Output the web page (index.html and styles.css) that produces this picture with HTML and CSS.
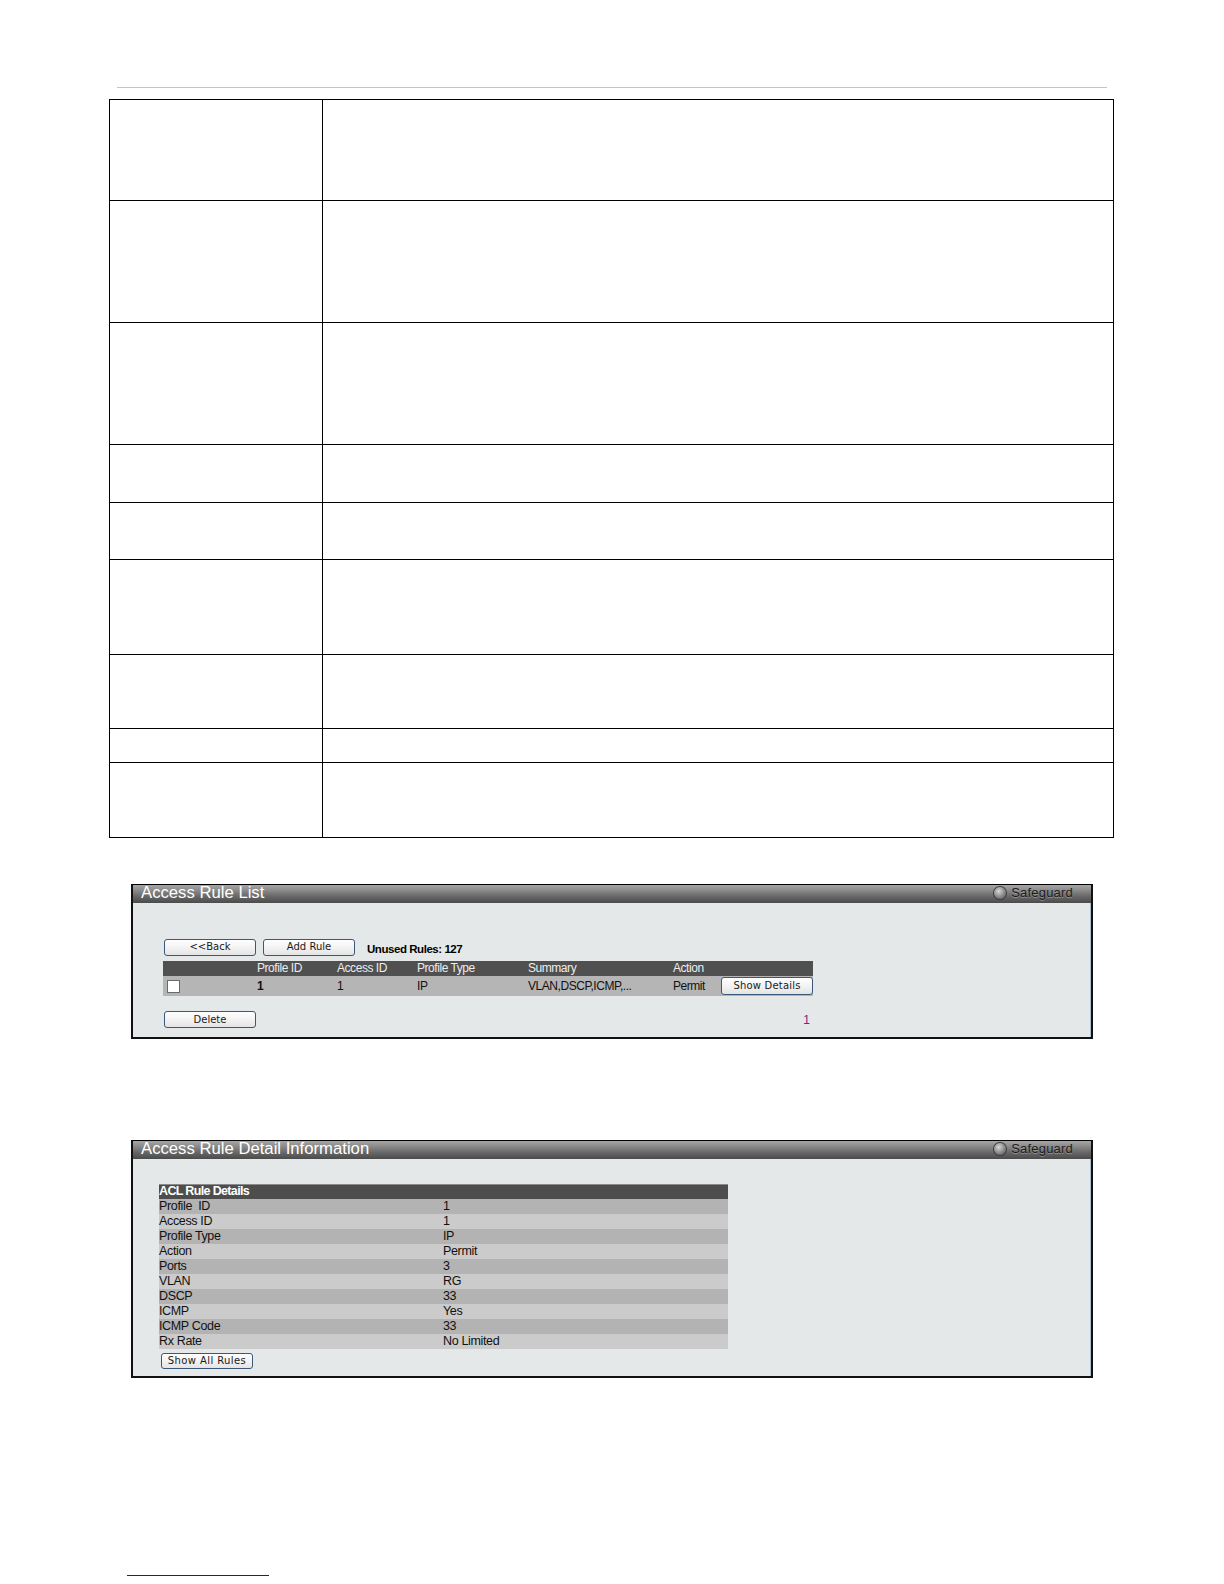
FILE: index.html
```html
<!DOCTYPE html>
<html>
<head>
<meta charset="utf-8">
<link rel="stylesheet" href="styles.css">
</head>
<body>
<div class="page">
  <div class="top-rule"></div>
  <table class="doc">
    <colgroup><col class="doc-c1"><col></colgroup>
    <tr class="r1"><td></td><td></td></tr>
    <tr class="r2"><td></td><td></td></tr>
    <tr class="r3"><td></td><td></td></tr>
    <tr class="r4"><td></td><td></td></tr>
    <tr class="r5"><td></td><td></td></tr>
    <tr class="r6"><td></td><td></td></tr>
    <tr class="r7"><td></td><td></td></tr>
    <tr class="r8"><td></td><td></td></tr>
    <tr class="r9"><td></td><td></td></tr>
  </table>

  <div class="panel panel-list">
    <div class="titlebar">
      <span class="title">Access Rule List</span>
      <span class="safeguard"><span class="led"></span><span class="sg-text">Safeguard</span></span>
    </div>
    <div class="body body-list">
      <div class="btn-row">
        <button class="btn btn-wide">&lt;&lt;Back</button>
        <button class="btn btn-wide">Add Rule</button>
        <span class="unused">Unused Rules: 127</span>
      </div>
      <table class="rules">
        <colgroup>
          <col class="c-chk"><col class="c-pid"><col class="c-aid"><col class="c-type"><col class="c-sum"><col class="c-act"><col class="c-btn">
        </colgroup>
        <tr class="rules-head">
          <th></th><th>Profile ID</th><th>Access ID</th><th>Profile Type</th><th>Summary</th><th>Action</th><th></th>
        </tr>
        <tr class="rules-row">
          <td><span class="chk"></span></td>
          <td class="bold">1</td>
          <td>1</td>
          <td>IP</td>
          <td>VLAN,DSCP,ICMP,...</td>
          <td>Permit</td>
          <td><button class="btn btn-details">Show Details</button></td>
        </tr>
      </table>
      <div class="bottom-row">
        <button class="btn btn-wide btn-delete">Delete</button>
        <span class="pager">1</span>
      </div>
    </div>
  </div>

  <div class="panel panel-detail">
    <div class="titlebar">
      <span class="title">Access Rule Detail Information</span>
      <span class="safeguard"><span class="led"></span><span class="sg-text">Safeguard</span></span>
    </div>
    <div class="body body-detail">
      <table class="details">
        <colgroup><col class="d-c1"><col></colgroup>
        <tr class="details-head"><th colspan="2">ACL Rule Details</th></tr>
        <tr><td>Profile&nbsp;&nbsp;ID</td><td>1</td></tr>
        <tr><td>Access ID</td><td>1</td></tr>
        <tr><td>Profile Type</td><td>IP</td></tr>
        <tr><td>Action</td><td>Permit</td></tr>
        <tr><td>Ports</td><td>3</td></tr>
        <tr><td>VLAN</td><td>RG</td></tr>
        <tr><td>DSCP</td><td>33</td></tr>
        <tr><td>ICMP</td><td>Yes</td></tr>
        <tr><td>ICMP Code</td><td>33</td></tr>
        <tr><td>Rx Rate</td><td>No Limited</td></tr>
      </table>
      <button class="btn btn-all">Show All Rules</button>
    </div>
  </div>

  <div class="foot-rule"></div>
</div>
</body>
</html>
```

FILE: styles.css
```css
html, body {
  margin: 0;
  padding: 0;
  background: #ffffff;
}
body {
  font-family: "Liberation Sans", Arial, sans-serif;
  color: #000;
}
.page {
  width: 1224px;
  height: 1584px;
  padding-top: 87px;
  box-sizing: border-box;
}
.top-rule {
  margin-left: 117px;
  width: 990px;
  height: 1px;
  background: #c4c4c4;
}

/* document table */
.doc {
  margin: 11px 0 0 109px;
  width: 1005px;
  border-collapse: collapse;
  table-layout: fixed;
}
.doc td {
  border: 1.5px solid #000;
  padding: 0;
}
.doc-c1 { width: 213px; }
.r1 { height: 101px; }
.r2 { height: 122px; }
.r3 { height: 122px; }
.r4 { height: 58px; }
.r5 { height: 57px; }
.r6 { height: 95px; }
.r7 { height: 74px; }
.r8 { height: 34px; }
.r9 { height: 75px; }

/* panels */
.panel {
  margin-left: 131px;
  width: 962px;
  box-sizing: border-box;
  border: 2px solid #111;
  border-top: 1px solid #000;
  background: #e5e8e8;
  box-shadow: inset -1px 0 0 #a9bdd2;
}
.panel-list { margin-top: 46px; height: 155px; }
.panel-detail { margin-top: 101px; height: 238px; }

.titlebar {
  height: 18px;
  display: flex;
  align-items: center;
  justify-content: space-between;
  padding: 0 18px 0 8px;
  background: linear-gradient(#a6a6a6 0%, #8a8a8a 30%, #666 65%, #4b4b4b 100%);
}
.title {
  color: #fff;
  font-size: 16.7px;
  line-height: 16px;
  margin-top: -3px;
}
.safeguard {
  display: flex;
  align-items: center;
  gap: 5px;
  margin-top: -2px;
}
.led {
  width: 12px;
  height: 12px;
  border-radius: 50%;
  background: radial-gradient(circle at 40% 35%, #d8d8d8 0%, #8e8e8e 50%, #4a4a4a 100%);
  box-shadow: 0 0 0 1px #3a3a3a;
}
.sg-text {
  font-size: 13px;
  line-height: 14px;
  color: #1c1c1c;
  text-shadow: 0 1px 0 rgba(190, 190, 190, 0.5);
  letter-spacing: 0.2px;
}

.body-list {
  padding: 36px 0 0 30px;
}
.body-detail {
  padding: 25px 0 0 26px;
}

/* buttons */
.btn {
  font-family: "DejaVu Sans", Verdana, sans-serif;
  font-size: 10px;
  color: #1a1a1a;
  background: linear-gradient(#ffffff, #f0f0f0 60%, #e4e4e4);
  border: 1px solid #3a5878;
  border-radius: 3px;
  padding: 0;
  margin: 0;
  height: 17px;
  line-height: 14px;
  box-sizing: border-box;
}
.btn-row {
  display: flex;
  align-items: center;
  height: 16px;
  margin-left: 1px;
}
.btn-wide {
  width: 92px;
  margin-right: 7px;
}
.unused {
  margin-left: 5px;
  font-weight: bold;
  font-size: 11.5px;
  letter-spacing: -0.45px;
  margin-top: 4px;
}

/* rules table */
.rules {
  margin-top: 6px;
  width: 650px;
  border-collapse: collapse;
  table-layout: fixed;
  font-size: 12px;
  letter-spacing: -0.45px;
}
.rules th, .rules td {
  padding: 0;
  text-align: left;
  white-space: nowrap;
}
.c-chk { width: 94px; }
.c-pid { width: 80px; }
.c-aid { width: 80px; }
.c-type { width: 111px; }
.c-sum { width: 145px; }
.c-act { width: 48px; }
.c-btn { width: 92px; }
.rules-head {
  height: 15px;
  background: #505050;
}
.rules-head th {
  color: #ececec;
  font-weight: normal;
  line-height: 15px;
}
.rules-row {
  height: 20px;
  background: #b5b5b5;
}
.rules-row td { color: #111; }
.bold { font-weight: bold; }
.chk {
  display: block;
  margin-left: 4px;
  width: 11px;
  height: 11px;
  background: #fff;
  border: 1px solid #6a6a6a;
}
.btn-details {
  width: 92px;
  height: 18px;
  letter-spacing: 0.2px;
}

.bottom-row {
  display: flex;
  align-items: center;
  justify-content: space-between;
  width: 650px;
  margin-top: 15px;
  margin-left: 1px;
}
.btn-delete { margin-right: 0; }
.pager {
  color: #7d2090;
  font-size: 12px;
  margin-right: 4px;
}

/* details table */
.details {
  width: 569px;
  border-collapse: collapse;
  table-layout: fixed;
  font-size: 12.5px;
}
.d-c1 { width: 284px; }
.details th, .details td {
  padding: 0;
  height: 15px;
  line-height: 15px;
  text-align: left;
  white-space: nowrap;
}
.details td {
  color: #111;
  letter-spacing: -0.35px;
}
.details-head th {
  background: #4d4d4d;
  color: #fff;
  font-weight: bold;
  letter-spacing: -0.65px;
  box-shadow: inset 0 1px 0 #8a8a8a;
}
.details tr:nth-child(even) td { background: #b3b3b3; }
.details tr:nth-child(odd) td { background: #cbcbcb; }
.btn-all {
  margin-top: 4px;
  margin-left: 2px;
  width: 92px;
  height: 16px;
  letter-spacing: 0.4px;
}

.foot-rule {
  margin: 197px 0 0 127px;
  width: 142px;
  height: 1px;
  background: #1c1c8c;
}
```
